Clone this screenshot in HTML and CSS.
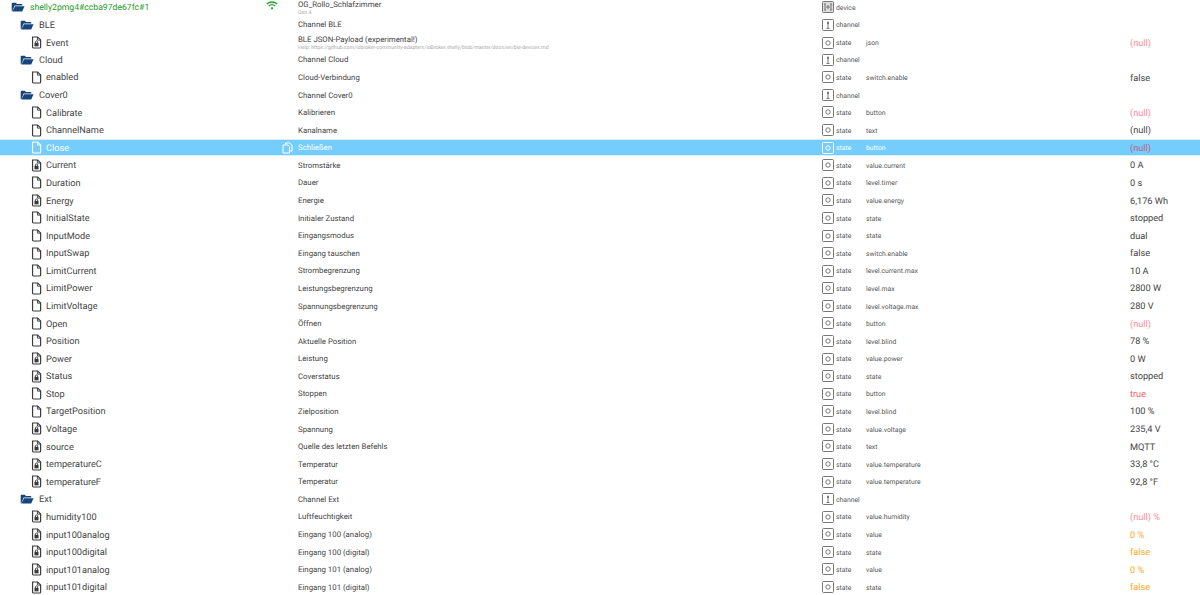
FILE: index.html
```html
<!DOCTYPE html>
<html lang="de">
<head>
<meta charset="utf-8">
<title>Objekte</title>
<link rel="stylesheet" href="styles.css">
</head>
<body>
<svg class="defs" width="0" height="0" aria-hidden="true">
  <symbol id="folder" viewBox="0 0 20 14"><path d="M1 13V2.2C1 1.5 1.5 1 2.2 1h4.6l1.7 1.8h6.6c.7 0 1.1.4 1.1 1.1V5H5.2L1.8 13z" fill="currentColor"/><path d="M5.8 6H19.4L16 13.4H1.9z" fill="currentColor"/></symbol>
  <symbol id="file" viewBox="0 0 12 14"><path d="M1.7 1h5.6L10.5 4.2V12c0 .6-.4 1-1 1H2.5c-.5 0-.8-.4-.8-1z" fill="none" stroke="currentColor" stroke-width="1.3"/><path d="M7 1v3.4h3.5" fill="none" stroke="currentColor" stroke-width="1"/></symbol>
  <symbol id="lock" viewBox="0 0 12 14"><path d="M1.7 1h5.6L10.5 4.2V12c0 .6-.4 1-1 1H2.5c-.5 0-.8-.4-.8-1z" fill="none" stroke="currentColor" stroke-width="1.3"/><path d="M7 1v3.4h3.5" fill="none" stroke="currentColor" stroke-width="1"/><rect x="3.8" y="7.4" width="4.4" height="3.8" fill="currentColor"/><path d="M4.8 7.6V6.4c0-1.4 2.4-1.4 2.4 0v1.2" fill="none" stroke="currentColor"/></symbol>
  <symbol id="device" viewBox="0 0 12 12"><rect x=".5" y=".5" width="11" height="11" rx="1" fill="#ddd" stroke="currentColor"/><path d="M3 3v6M2 3h2M2 9h2M9 3v6M8 3h2M8 9h2M5 5h2v2H5z" fill="none" stroke="currentColor"/></symbol>
  <symbol id="channel" viewBox="0 0 12 12"><rect x=".5" y=".5" width="11" height="11" rx="1" fill="none" stroke="currentColor"/><path d="M6 2.5v7" stroke="currentColor" stroke-width="1"/><rect x="5" y="3" width="2" height="2" fill="currentColor"/><path d="M4.5 9.5h3" stroke="currentColor"/></symbol>
  <symbol id="state" viewBox="0 0 12 12"><rect x=".5" y=".5" width="11" height="11" rx="1" fill="none" stroke="currentColor"/><circle cx="6" cy="6" r="2.2" fill="none" stroke="currentColor"/></symbol>
  <symbol id="wifi" viewBox="0 0 12 9"><path d="M.8 3C3.8.3 8.2.3 11.2 3M2.6 5C4.6 3.3 7.4 3.3 9.4 5" fill="none" stroke="currentColor" stroke-width="1.3"/><circle cx="6" cy="7.3" r="1.1" fill="currentColor"/></symbol>
  <symbol id="copy" viewBox="0 0 11 12"><path d="M3.5 2.5V1h4.3L10 3.2V9H8.2" fill="none" stroke="currentColor"/><path d="M1 3h5l1.5 1.5V11H1z" fill="none" stroke="currentColor"/></symbol>
</svg>
<main class="tree">
  <div class="row device">
    <div class="name lv0"><svg class="ic-folder"><use href="#folder"/></svg><span class="id-green">shelly2pmg4#ccba97de67fc#1</span></div>
    <svg class="ic-wifi"><use href="#wifi"/></svg>
    <div class="desc two">OG_Rollo_Schlafzimmer<small>Gen 4</small></div>
    <div class="type"><svg class="ic-type"><use href="#device"/></svg>device</div><div class="role"></div><div class="val"></div>
  </div>
  <div class="row">
    <div class="name lv1"><svg class="ic-folder"><use href="#folder"/></svg>BLE</div>
    <div class="desc">Channel BLE</div>
    <div class="type"><svg class="ic-type"><use href="#channel"/></svg>channel</div><div class="role"></div><div class="val"></div>
  </div>
  <div class="row">
    <div class="name lv2"><svg class="ic-file"><use href="#lock"/></svg>Event</div>
    <div class="desc two">BLE JSON-Payload (experimental!)<small>Help: https://github.com/iobroker-community-adapters/ioBroker.shelly/blob/master/docs/en/ble-devices.md</small></div>
    <div class="type"><svg class="ic-type"><use href="#state"/></svg>state</div><div class="role">json</div><div class="val null">(null)</div>
  </div>
  <div class="row">
    <div class="name lv1"><svg class="ic-folder"><use href="#folder"/></svg>Cloud</div>
    <div class="desc">Channel Cloud</div>
    <div class="type"><svg class="ic-type"><use href="#channel"/></svg>channel</div><div class="role"></div><div class="val"></div>
  </div>
  <div class="row">
    <div class="name lv2"><svg class="ic-file"><use href="#file"/></svg>enabled</div>
    <div class="desc">Cloud-Verbindung</div>
    <div class="type"><svg class="ic-type"><use href="#state"/></svg>state</div><div class="role">switch.enable</div><div class="val">false</div>
  </div>
  <div class="row">
    <div class="name lv1"><svg class="ic-folder"><use href="#folder"/></svg>Cover0</div>
    <div class="desc">Channel Cover0</div>
    <div class="type"><svg class="ic-type"><use href="#channel"/></svg>channel</div><div class="role"></div><div class="val"></div>
  </div>
  <div class="row">
    <div class="name lv2"><svg class="ic-file"><use href="#file"/></svg>Calibrate</div>
    <div class="desc">Kalibrieren</div>
    <div class="type"><svg class="ic-type"><use href="#state"/></svg>state</div><div class="role">button</div><div class="val null">(null)</div>
  </div>
  <div class="row">
    <div class="name lv2"><svg class="ic-file"><use href="#file"/></svg>ChannelName</div>
    <div class="desc">Kanalname</div>
    <div class="type"><svg class="ic-type"><use href="#state"/></svg>state</div><div class="role">text</div><div class="val">(null)</div>
  </div>
  <div class="row selected">
    <div class="name lv2"><svg class="ic-file"><use href="#file"/></svg>Close</div>
    <svg class="ic-copy"><use href="#copy"/></svg>
    <div class="desc">Schließen</div>
    <div class="type"><svg class="ic-type"><use href="#state"/></svg>state</div><div class="role">button</div><div class="val null">(null)</div>
  </div>
  <div class="row">
    <div class="name lv2"><svg class="ic-file"><use href="#lock"/></svg>Current</div>
    <div class="desc">Stromstärke</div>
    <div class="type"><svg class="ic-type"><use href="#state"/></svg>state</div><div class="role">value.current</div><div class="val">0 A</div>
  </div>
  <div class="row">
    <div class="name lv2"><svg class="ic-file"><use href="#file"/></svg>Duration</div>
    <div class="desc">Dauer</div>
    <div class="type"><svg class="ic-type"><use href="#state"/></svg>state</div><div class="role">level.timer</div><div class="val">0 s</div>
  </div>
  <div class="row">
    <div class="name lv2"><svg class="ic-file"><use href="#lock"/></svg>Energy</div>
    <div class="desc">Energie</div>
    <div class="type"><svg class="ic-type"><use href="#state"/></svg>state</div><div class="role">value.energy</div><div class="val">6,176 Wh</div>
  </div>
  <div class="row">
    <div class="name lv2"><svg class="ic-file"><use href="#file"/></svg>InitialState</div>
    <div class="desc">Initialer Zustand</div>
    <div class="type"><svg class="ic-type"><use href="#state"/></svg>state</div><div class="role">state</div><div class="val">stopped</div>
  </div>
  <div class="row">
    <div class="name lv2"><svg class="ic-file"><use href="#file"/></svg>InputMode</div>
    <div class="desc">Eingangsmodus</div>
    <div class="type"><svg class="ic-type"><use href="#state"/></svg>state</div><div class="role">state</div><div class="val">dual</div>
  </div>
  <div class="row">
    <div class="name lv2"><svg class="ic-file"><use href="#file"/></svg>InputSwap</div>
    <div class="desc">Eingang tauschen</div>
    <div class="type"><svg class="ic-type"><use href="#state"/></svg>state</div><div class="role">switch.enable</div><div class="val">false</div>
  </div>
  <div class="row">
    <div class="name lv2"><svg class="ic-file"><use href="#file"/></svg>LimitCurrent</div>
    <div class="desc">Strombegrenzung</div>
    <div class="type"><svg class="ic-type"><use href="#state"/></svg>state</div><div class="role">level.current.max</div><div class="val">10 A</div>
  </div>
  <div class="row">
    <div class="name lv2"><svg class="ic-file"><use href="#file"/></svg>LimitPower</div>
    <div class="desc">Leistungsbegrenzung</div>
    <div class="type"><svg class="ic-type"><use href="#state"/></svg>state</div><div class="role">level.max</div><div class="val">2800 W</div>
  </div>
  <div class="row">
    <div class="name lv2"><svg class="ic-file"><use href="#file"/></svg>LimitVoltage</div>
    <div class="desc">Spannungsbegrenzung</div>
    <div class="type"><svg class="ic-type"><use href="#state"/></svg>state</div><div class="role">level.voltage.max</div><div class="val">280 V</div>
  </div>
  <div class="row">
    <div class="name lv2"><svg class="ic-file"><use href="#file"/></svg>Open</div>
    <div class="desc">Öffnen</div>
    <div class="type"><svg class="ic-type"><use href="#state"/></svg>state</div><div class="role">button</div><div class="val null">(null)</div>
  </div>
  <div class="row">
    <div class="name lv2"><svg class="ic-file"><use href="#file"/></svg>Position</div>
    <div class="desc">Aktuelle Position</div>
    <div class="type"><svg class="ic-type"><use href="#state"/></svg>state</div><div class="role">level.blind</div><div class="val">78 %</div>
  </div>
  <div class="row">
    <div class="name lv2"><svg class="ic-file"><use href="#lock"/></svg>Power</div>
    <div class="desc">Leistung</div>
    <div class="type"><svg class="ic-type"><use href="#state"/></svg>state</div><div class="role">value.power</div><div class="val">0 W</div>
  </div>
  <div class="row">
    <div class="name lv2"><svg class="ic-file"><use href="#lock"/></svg>Status</div>
    <div class="desc">Coverstatus</div>
    <div class="type"><svg class="ic-type"><use href="#state"/></svg>state</div><div class="role">state</div><div class="val">stopped</div>
  </div>
  <div class="row">
    <div class="name lv2"><svg class="ic-file"><use href="#file"/></svg>Stop</div>
    <div class="desc">Stoppen</div>
    <div class="type"><svg class="ic-type"><use href="#state"/></svg>state</div><div class="role">button</div><div class="val bool-red">true</div>
  </div>
  <div class="row">
    <div class="name lv2"><svg class="ic-file"><use href="#file"/></svg>TargetPosition</div>
    <div class="desc">Zielposition</div>
    <div class="type"><svg class="ic-type"><use href="#state"/></svg>state</div><div class="role">level.blind</div><div class="val">100 %</div>
  </div>
  <div class="row">
    <div class="name lv2"><svg class="ic-file"><use href="#lock"/></svg>Voltage</div>
    <div class="desc">Spannung</div>
    <div class="type"><svg class="ic-type"><use href="#state"/></svg>state</div><div class="role">value.voltage</div><div class="val">235,4 V</div>
  </div>
  <div class="row">
    <div class="name lv2"><svg class="ic-file"><use href="#lock"/></svg>source</div>
    <div class="desc">Quelle des letzten Befehls</div>
    <div class="type"><svg class="ic-type"><use href="#state"/></svg>state</div><div class="role">text</div><div class="val">MQTT</div>
  </div>
  <div class="row">
    <div class="name lv2"><svg class="ic-file"><use href="#lock"/></svg>temperatureC</div>
    <div class="desc">Temperatur</div>
    <div class="type"><svg class="ic-type"><use href="#state"/></svg>state</div><div class="role">value.temperature</div><div class="val">33,8 °C</div>
  </div>
  <div class="row">
    <div class="name lv2"><svg class="ic-file"><use href="#lock"/></svg>temperatureF</div>
    <div class="desc">Temperatur</div>
    <div class="type"><svg class="ic-type"><use href="#state"/></svg>state</div><div class="role">value.temperature</div><div class="val">92,8 °F</div>
  </div>
  <div class="row">
    <div class="name lv1"><svg class="ic-folder"><use href="#folder"/></svg>Ext</div>
    <div class="desc">Channel Ext</div>
    <div class="type"><svg class="ic-type"><use href="#channel"/></svg>channel</div><div class="role"></div><div class="val"></div>
  </div>
  <div class="row">
    <div class="name lv2"><svg class="ic-file"><use href="#lock"/></svg>humidity100</div>
    <div class="desc">Luftfeuchtigkeit</div>
    <div class="type"><svg class="ic-type"><use href="#state"/></svg>state</div><div class="role">value.humidity</div><div class="val null">(null) %</div>
  </div>
  <div class="row">
    <div class="name lv2"><svg class="ic-file"><use href="#lock"/></svg>input100analog</div>
    <div class="desc">Eingang 100 (analog)</div>
    <div class="type"><svg class="ic-type"><use href="#state"/></svg>state</div><div class="role">value</div><div class="val warn">0 %</div>
  </div>
  <div class="row">
    <div class="name lv2"><svg class="ic-file"><use href="#lock"/></svg>input100digital</div>
    <div class="desc">Eingang 100 (digital)</div>
    <div class="type"><svg class="ic-type"><use href="#state"/></svg>state</div><div class="role">state</div><div class="val warn">false</div>
  </div>
  <div class="row">
    <div class="name lv2"><svg class="ic-file"><use href="#lock"/></svg>input101analog</div>
    <div class="desc">Eingang 101 (analog)</div>
    <div class="type"><svg class="ic-type"><use href="#state"/></svg>state</div><div class="role">value</div><div class="val warn">0 %</div>
  </div>
  <div class="row">
    <div class="name lv2"><svg class="ic-file"><use href="#lock"/></svg>input101digital</div>
    <div class="desc">Eingang 101 (digital)</div>
    <div class="type"><svg class="ic-type"><use href="#state"/></svg>state</div><div class="role">state</div><div class="val warn">false</div>
  </div>
</main>
</body>
</html>
```
FILE: styles.css
```css
html, body {
  margin: 0;
  height: 595px;
  overflow: hidden;
  background: #fff;
}
.defs { display: block; height: 0; }
.tree {
  margin-top: -1.8px;
  font-family: "Roboto", "Open Sans", sans-serif;
  font-size: 9.2px;
  color: #444;
  text-rendering: geometricPrecision;
}
.row {
  position: relative;
  display: grid;
  grid-template-columns: 298px 524px 44px 264px 70px;
  align-items: center;
  height: 17.58px;
  padding-top: 1.4px;
  box-sizing: border-box;
}
.row.selected {
  background: #74cdfd;
  color: #fff;
  border-top: 1px solid #d4effd;
  border-bottom: 1px solid #d4effd;
}
.name { display: flex; align-items: center; white-space: nowrap; }
.lv0 { padding-left: 11px; }
.lv1 { padding-left: 20px; }
.lv2 { padding-left: 31px; }
.ic-folder { width: 14px; height: 10px; margin: -1.4px 5px 0 0; color: #17457b; flex: none; }
.ic-file { width: 11px; height: 13px; margin: -1.4px 4px 0 0; color: #3a3a3a; flex: none; }
.selected .ic-file { color: #fff; }
.id-green { color: #1f9a1f; font-size: 8.65px; }
.ic-wifi { position: absolute; left: 266px; top: 3px; width: 12px; height: 9px; color: #27a327; }
.ic-copy { position: absolute; left: 282px; top: 2px; width: 11px; height: 12px; color: #fff; }
.desc { font-size: 7.8px; white-space: nowrap; line-height: 8px; }
.desc.two { margin-top: 1px; }
.desc small { display: block; font-size: 5.2px; line-height: 8px; color: #aaa; }
.type { display: flex; align-items: center; font-size: 6.8px; color: #555; white-space: nowrap; }
.selected .type, .selected .role, .selected .desc { color: #fff; }
.ic-type { width: 12px; height: 12px; margin: -1.4px 2px 0 0; color: #777; flex: none; }
.selected .ic-type { color: #fff; }
.role { font-size: 6.8px; color: #555; }
.val { font-size: 9.2px; white-space: nowrap; }
.null { color: #ff8b98; }
.selected .null { color: #c0607f; }
.bool-red { color: #f25a5a; }
.warn { color: #ffa726; }
```
